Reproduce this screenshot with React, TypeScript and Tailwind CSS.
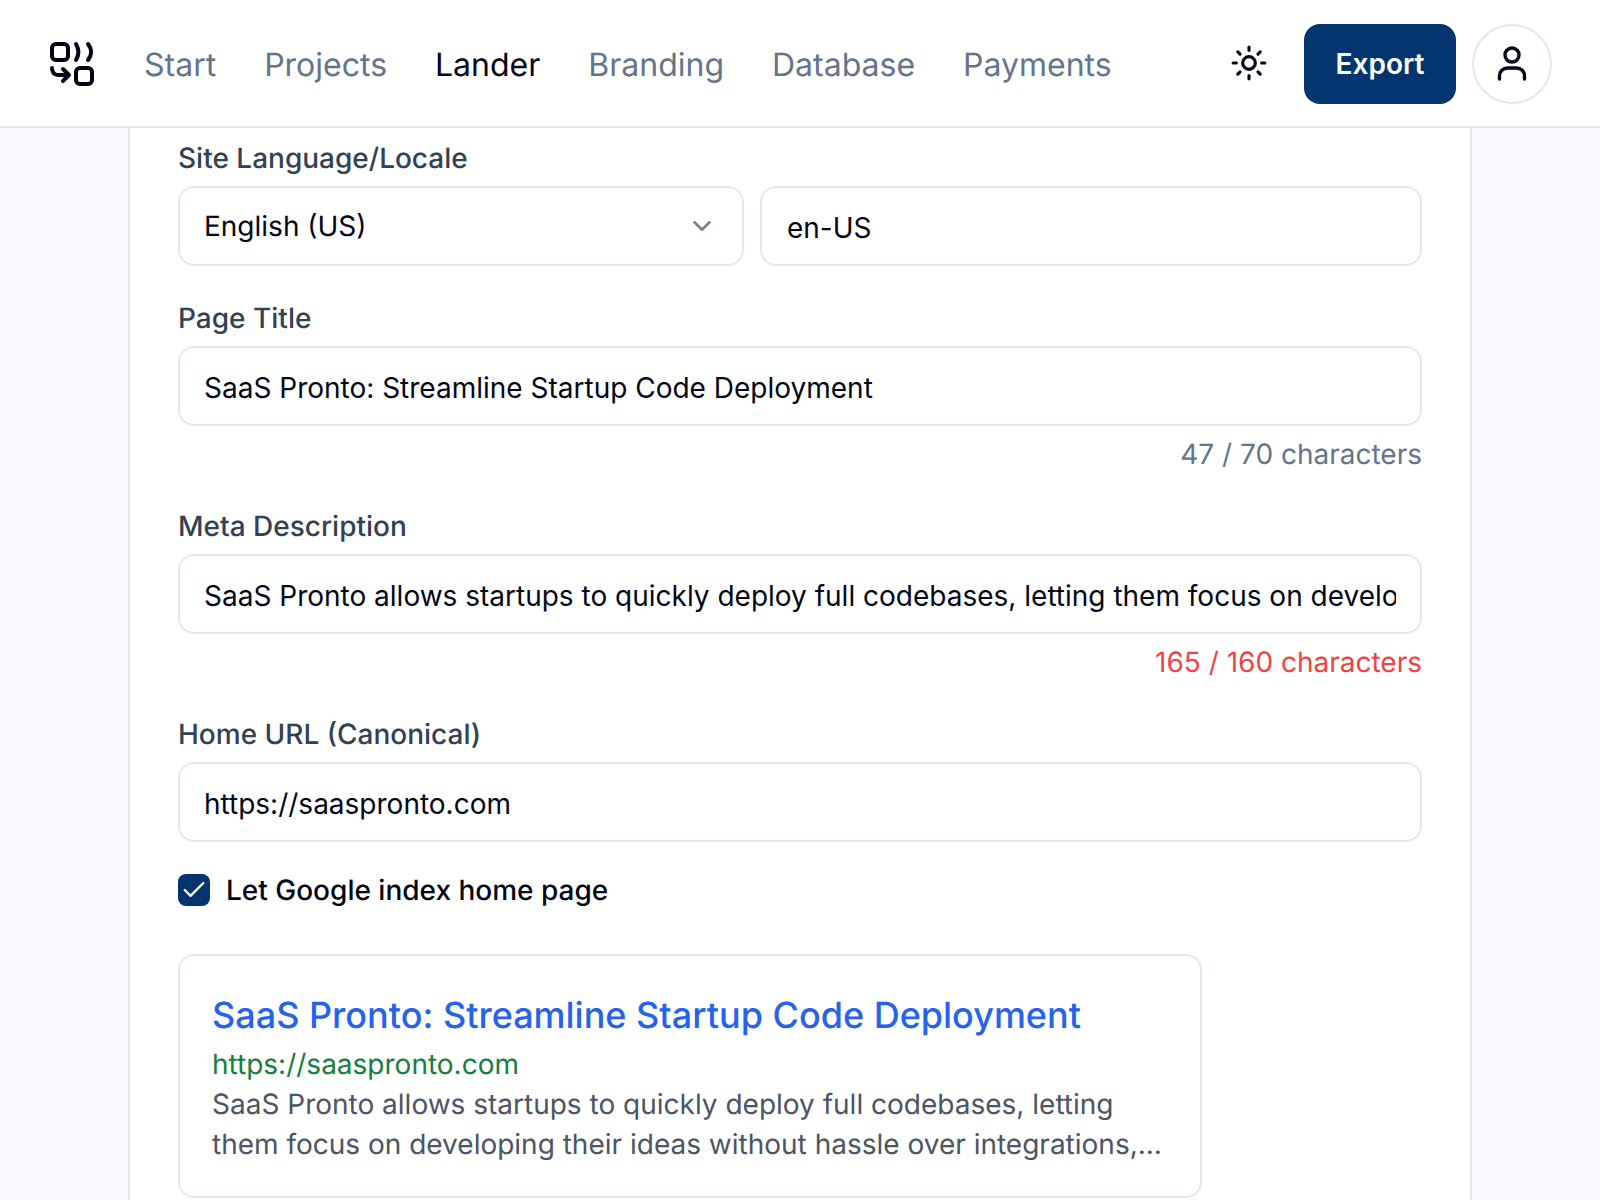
import { Check, ChevronDown, Sun } from 'lucide-react'

const navItems = ['Start', 'Projects', 'Lander', 'Branding', 'Database', 'Payments']

const Logo = () => (
  <svg width="48" height="48" viewBox="0 0 48 48" fill="none" stroke="#020617" strokeWidth="4" strokeLinecap="round" strokeLinejoin="round">
    <rect x="4" y="4" width="16" height="16" rx="4" />
    <path d="M28 4c3 5 3 11 0 16" />
    <path d="M40 4c4 5 4 11 0 16" />
    <rect x="28" y="28" width="16" height="16" rx="4" />
    <path d="M4 28c0 4 2 7 6 7h10" />
    <path d="M15 29l6 6-6 6" />
  </svg>
)

const UserIcon = () => (
  <svg width="32" height="36" viewBox="0 0 32 36" fill="none" stroke="#020617" strokeWidth="3.4" strokeLinecap="round">
    <circle cx="16" cy="9" r="7" />
    <path d="M3.500 33v-3c0-4.500 3.500-8 8-8h9c4.500 0 8 3.500 8 8v3" />
  </svg>
)

const Field = ({ label, value, hint, hintClass }: { label: string; value: string; hint?: string; hintClass?: string }) => (
  <div className="flex flex-col">
    <label className="mb-2 text-[28px] leading-10 font-medium text-[#334155]">{label}</label>
    <input
      readOnly
      value={value}
      className="h-20 w-full rounded-2xl border-2 border-[#e2e8f0] bg-white px-6 pt-1 text-[28px] text-[#020617] outline-none"
    />
    {hint && <p className={`mt-2 text-right text-[28px] leading-10 ${hintClass}`}>{hint}</p>}
  </div>
)

export default function App() {
  return (
    <div className="flex h-[1200px] flex-col overflow-hidden bg-[#f6f8fc] font-['Inter',sans-serif] [text-rendering:geometricPrecision]">
      <header className="flex h-[128px] shrink-0 items-center border-b-2 border-[#e2e8f0] bg-white px-12 pt-0.5">
        <Logo />
        <nav className="ml-12 flex gap-12">
          {navItems.map(item => (
            <a key={item} className={`pt-0.5 text-[32px] leading-10 ${item === 'Lander' ? 'text-[#020617]' : 'text-[#64748b]'}`}>
              {item}
            </a>
          ))}
        </nav>
        <div className="ml-auto flex items-center">
          <Sun size={38} strokeWidth={2} className="mr-9 -mt-0.5 text-[#020617]" />
          <button className="h-20 w-[152px] rounded-2xl bg-[#03346e] text-[28px] font-semibold text-white">Export</button>
          <div className="ml-4 flex h-20 w-20 items-center justify-center rounded-full border-2 border-[#e2e8f0] bg-white">
            <UserIcon />
          </div>
        </div>
      </header>

      <main className="mx-auto w-[1344px] flex-1 border-x-2 border-[#e2e8f0] bg-white px-12 pt-2.5">
        <div className="flex flex-col gap-8">
          <div className="flex flex-col">
            <label className="mb-2 text-[28px] leading-10 font-medium text-[#334155]">Site Language/Locale</label>
            <div className="flex gap-4">
              <div className="flex h-20 w-[566px] items-center justify-between rounded-2xl border-2 border-[#e2e8f0] bg-white pr-4 pl-6 text-[28px] text-[#020617]">
                <span>English (US)</span>
                <ChevronDown size={30} strokeWidth={2} className="mr-[9px] text-[#718096]" />
              </div>
              <input
                readOnly
                value="en-US"
                className="h-20 flex-1 rounded-2xl border-2 border-[#e2e8f0] bg-white pt-1 pr-6 pl-[25px] text-[28px] text-[#020617] outline-none"
              />
            </div>
          </div>

          <Field label="Page Title" value="SaaS Pronto: Streamline Startup Code Deployment" hint="47 / 70 characters" hintClass="text-[#64748b]" />
          <Field
            label="Meta Description"
            value="SaaS Pronto allows startups to quickly deploy full codebases, letting them focus on developing their ideas without hassle over integrations, and more."
            hint="165 / 160 characters"
            hintClass="text-[#ef4444]"
          />
          <Field label="Home URL (Canonical)" value="https://saaspronto.com" />
        </div>

        <div className="mt-7 flex h-10 items-center gap-4">
          <span className="flex h-8 w-8 items-center justify-center rounded-lg bg-[#03346e]">
            <Check size={28} strokeWidth={2} className="text-white" />
          </span>
          <span className="text-[28px] leading-10 font-medium text-[#020617]">Let Google index home page</span>
        </div>

        <div className="mt-11 w-[1024px] rounded-2xl border-2 border-[#e2e8f0] bg-white px-8 pt-[31px] pb-8">
          <h3 className="pb-px text-[36px] leading-[56px] font-medium text-[#2563eb]">SaaS Pronto: Streamline Startup Code Deployment</h3>
          <p className="text-[28px] leading-10 text-[#15803d]">https://saaspronto.com</p>
          <p className="text-[28px] leading-10 text-[#4b5563]">
            SaaS Pronto allows startups to quickly deploy full codebases, letting them focus on developing their ideas without hassle over integrations,...
          </p>
        </div>
      </main>
    </div>
  )
}
